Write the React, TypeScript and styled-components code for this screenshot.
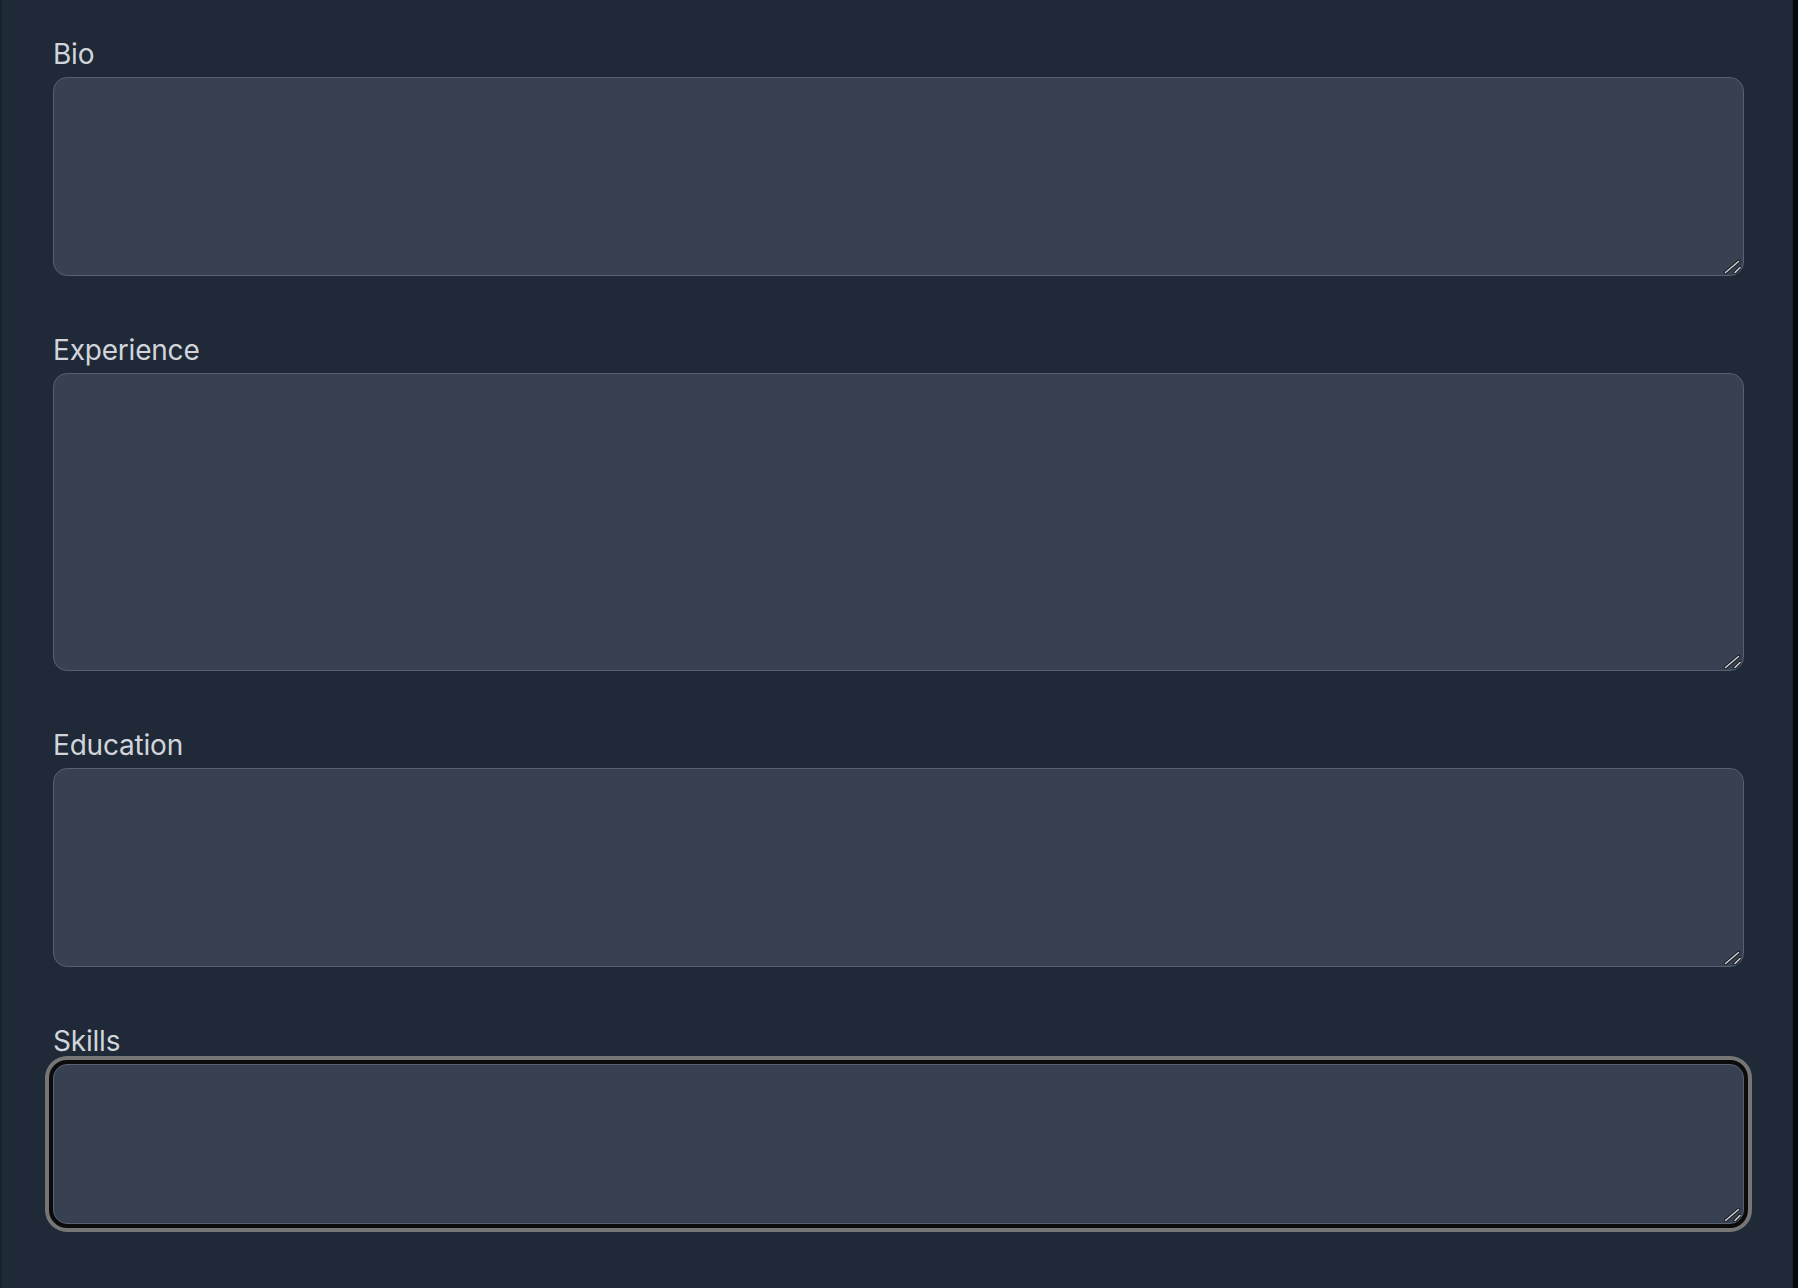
import React from 'react';
import styled, { createGlobalStyle, css } from 'styled-components';

const GlobalStyle = createGlobalStyle`
  html, body {
    margin: 0;
    padding: 0;
    background: #040910;
    color-scheme: dark;
  }
  * {
    box-sizing: border-box;
  }
`;

const Panel = styled.div`
  width: 1793px;
  min-height: 1288px;
  background: #1f2937;
  border-left: 2px solid #14262b;
  border-right: 1px solid #14262b;
  padding: 36px 48px 64px 51px;
  display: flex;
  flex-direction: column;
  gap: 56px;
  font-family: Inter, "Noto Sans", "DejaVu Sans", sans-serif;
`;

const Field = styled.div`
  display: flex;
  flex-direction: column;
`;

const Label = styled.label`
  font-size: 28px;
  line-height: 37px;
  font-weight: 400;
  letter-spacing: -0.2px;
  color: #d1d5db;
  margin-bottom: 4px;
`;

const InputWrap = styled.div`
  position: relative;
`;

const TextArea = styled.textarea<{ $height: number; $focused?: boolean }>`
  display: block;
  width: 100%;
  height: ${(p) => p.$height}px;
  background: #374151;
  border: 1px solid #556070;
  border-radius: 14px;
  color: #e5e7eb;
  font-family: inherit;
  font-size: 28px;
  padding: 14px 21px;
  resize: none;
  outline: none;

  ${(p) =>
    p.$focused &&
    css`
      box-shadow: 0 0 0 4px #0b0b0b, 0 0 0 8px #767676;
    `}
`;

const Grip = styled.svg`
  position: absolute;
  right: 3px;
  bottom: 2px;
  width: 18px;
  height: 15px;
  pointer-events: none;
`;

const ResizeGrip: React.FC = () => (
  <Grip viewBox="0 0 18 15">
    <g strokeLinecap="round">
      <path d="M2.5 13.5 L15.5 2.5 M12 13.5 L17 8.5" stroke="#1b1d22" strokeWidth="3.6" />
      <path d="M2.5 13.5 L15.5 2.5 M12 13.5 L17 8.5" stroke="#cfd1d4" strokeWidth="1.5" />
    </g>
  </Grip>
);

const fields = [
  { id: 'bio', label: 'Bio', height: 199 },
  { id: 'experience', label: 'Experience', height: 298 },
  { id: 'education', label: 'Education', height: 199 },
  { id: 'skills', label: 'Skills', height: 160, focused: true },
];

const App: React.FC = () => {
  return (
    <>
      <GlobalStyle />
      <Panel>
        {fields.map((field) => (
          <Field key={field.id}>
            <Label htmlFor={field.id}>{field.label}</Label>
            <InputWrap>
              <TextArea id={field.id} $height={field.height} $focused={field.focused} />
              <ResizeGrip />
            </InputWrap>
          </Field>
        ))}
      </Panel>
    </>
  );
};

export default App;
